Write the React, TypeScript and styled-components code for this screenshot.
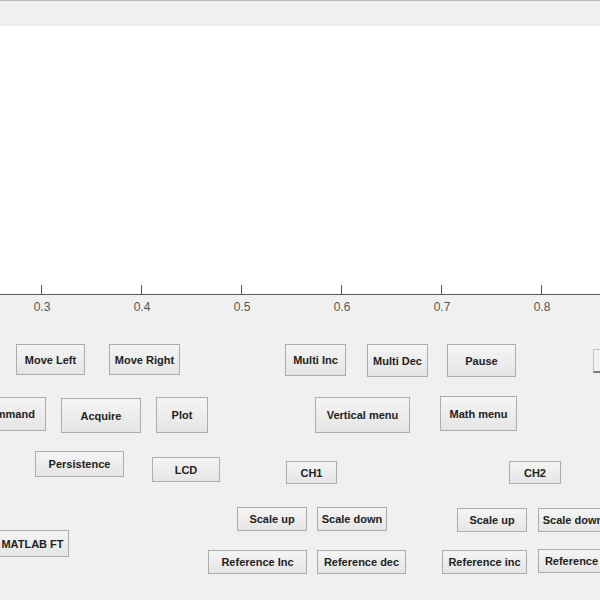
import React from "react";
import styled, { createGlobalStyle } from "styled-components";

const GlobalStyle = createGlobalStyle`
  html, body {
    margin: 0;
    padding: 0;
    background: #f0f0f0;
  }
  #root {
    width: 600px;
    height: 600px;
  }
`;

const PANEL_TOP = 316;

const Figure = styled.div`
  width: 600px;
  height: 600px;
  overflow: hidden;
  background: #f0f0f0;
  border-top: 1px solid #b6b6b6;
  box-sizing: border-box;
  display: flex;
  flex-direction: column;
  font-family: "Liberation Sans", Arial, sans-serif;
`;

const ToolStrip = styled.div`
  height: 25px;
  flex: none;
  background: #f0f0f0;
  border-bottom: 1px solid #ebebeb;
  box-sizing: border-box;
`;

const AxesWrap = styled.div`
  height: 290px;
  flex: none;
  display: block;
`;

const ControlCanvas = styled.div`
  position: relative;
  flex: 1;
`;

const PushButton = styled.button<{ $x: number; $y: number; $w: number; $h: number }>`
  position: absolute;
  left: ${(p) => p.$x}px;
  top: ${(p) => p.$y - PANEL_TOP}px;
  width: ${(p) => p.$w}px;
  height: ${(p) => p.$h}px;
  box-sizing: border-box;
  margin: 0;
  padding: 0;
  border: 1px solid #acacac;
  border-radius: 0;
  background: linear-gradient(to bottom, #f5f5f5 0%, #ececec 55%, #e5e5e5 100%);
  font-family: "Liberation Sans", Arial, sans-serif;
  font-weight: bold;
  font-size: 11px;
  color: #222222;
  white-space: nowrap;
  display: flex;
  align-items: center;
  justify-content: center;
  overflow: hidden;
`;

const EditField = styled.div<{ $x: number; $y: number; $w: number; $h: number }>`
  position: absolute;
  left: ${(p) => p.$x}px;
  top: ${(p) => p.$y - PANEL_TOP}px;
  width: ${(p) => p.$w}px;
  height: ${(p) => p.$h}px;
  box-sizing: border-box;
  border: 1px solid #c4c4c4;
  border-bottom: 2px solid #7a7a7a;
  background: #f3f3f3;
`;

type Btn = { label: string; x: number; y: number; w: number; h: number };

const buttons: Btn[] = [
  { label: "Move Left", x: 16, y: 344, w: 69, h: 31 },
  { label: "Move Right", x: 109, y: 344, w: 71, h: 31 },
  { label: "Multi Inc", x: 285, y: 344, w: 61, h: 32 },
  { label: "Multi Dec", x: 367, y: 344, w: 61, h: 33 },
  { label: "Pause", x: 447, y: 344, w: 69, h: 33 },
  { label: "Command", x: -30, y: 397, w: 76, h: 34 },
  { label: "Acquire", x: 61, y: 398, w: 80, h: 35 },
  { label: "Plot", x: 156, y: 397, w: 52, h: 36 },
  { label: "Vertical menu", x: 315, y: 397, w: 95, h: 36 },
  { label: "Math menu", x: 440, y: 396, w: 77, h: 35 },
  { label: "Persistence", x: 35, y: 451, w: 89, h: 26 },
  { label: "LCD", x: 152, y: 457, w: 68, h: 25 },
  { label: "CH1", x: 286, y: 461, w: 51, h: 23 },
  { label: "CH2", x: 509, y: 461, w: 52, h: 23 },
  { label: "Scale up", x: 237, y: 507, w: 70, h: 24 },
  { label: "Scale down", x: 317, y: 507, w: 70, h: 24 },
  { label: "Scale up", x: 457, y: 508, w: 70, h: 24 },
  { label: "Scale down", x: 538, y: 508, w: 70, h: 24 },
  { label: "MATLAB FT", x: -4, y: 530, w: 73, h: 27 },
  { label: "Reference Inc", x: 208, y: 550, w: 99, h: 24 },
  { label: "Reference dec", x: 317, y: 550, w: 89, h: 24 },
  { label: "Reference inc", x: 442, y: 550, w: 85, h: 24 },
  { label: "Reference dec", x: 538, y: 549, w: 89, h: 24 },
];

const ticks = [0.3, 0.4, 0.5, 0.6, 0.7, 0.8];

function Axes() {
  // tick x for 0.3 at 41.7, step 100px per 0.1
  return (
    <svg width="600" height="290" viewBox="0 0 600 290">
      <rect x="0" y="0" width="600" height="269" fill="#ffffff" />
      <line x1="0" y1="268.5" x2="600" y2="268.5" stroke="#5a5a5a" strokeWidth="1" />
      {ticks.map((t, i) => {
        const x = 41.5 + i * 100;
        return (
          <g key={t}>
            <line x1={x} y1="259" x2={x} y2="269" stroke="#5a5a5a" strokeWidth="1" />
            <text
              x={x + 0.5}
              y="285"
              textAnchor="middle"
              fontFamily="'Liberation Sans', Arial, sans-serif"
              fontSize="12"
              fill="#555555"
            >
              {t.toFixed(1)}
            </text>
          </g>
        );
      })}
    </svg>
  );
}

export default function App() {
  return (
    <>
      <GlobalStyle />
      <Figure>
        <ToolStrip />
        <AxesWrap>
          <Axes />
        </AxesWrap>
        <ControlCanvas>
          {buttons.map((b, i) => (
            <PushButton key={i} $x={b.x} $y={b.y} $w={b.w} $h={b.h}>
              {b.label}
            </PushButton>
          ))}
          <EditField $x={593} $y={349} $w={60} $h={24} />
        </ControlCanvas>
      </Figure>
    </>
  );
}
